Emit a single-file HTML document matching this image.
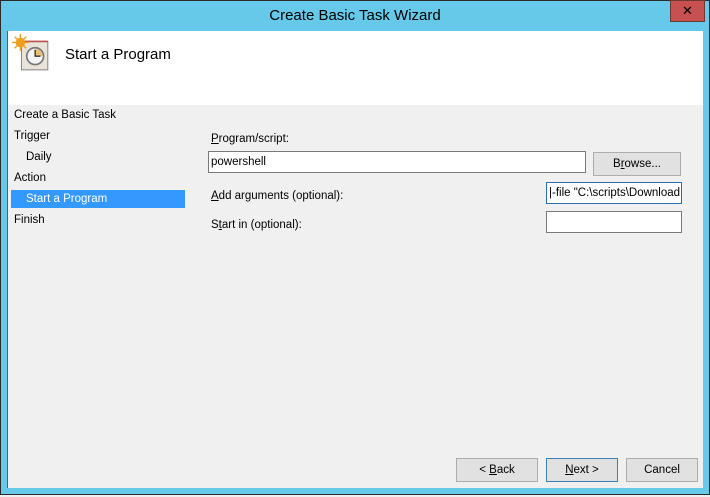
<!DOCTYPE html>
<html><head><meta charset="utf-8"><style>
*{margin:0;padding:0;box-sizing:border-box}
body{width:710px;height:497px;background:#f0f0f0;position:relative;overflow:hidden;font-family:"Liberation Sans","DejaVu Sans",sans-serif;font-size:12px;color:#000}
.win{position:absolute;left:0;top:0;width:710px;height:495px;background:#66c9e9;border:1px solid #2b2b2b}
.title{position:absolute;left:0;right:0;top:6px;text-align:center;font-size:15px;color:#000}
.close{position:absolute;left:669px;top:-1px;width:35px;height:22px;background:#c75050;border:1px solid #6b3a30;color:#000;font-weight:bold;font-size:13px;text-align:center;line-height:19px}
.content{position:absolute;left:7px;top:30px;width:695px;height:457px;background:#f0f0f0;box-shadow:-1px 0 0 #3a6a80}
.head{position:absolute;left:0;top:0;width:695px;height:74px;background:#fff}
.h1{position:absolute;left:57px;top:15px;font-size:15px}
.nav{position:absolute;left:6px;font-size:11.5px}
.sel{position:absolute;left:3px;top:159px;width:174px;height:18px;background:#3399ff}
.lbl{position:absolute;font-size:11.5px}
.in{position:absolute;background:#fff;border:1px solid #7a7a7a;height:22px;font-size:11.5px;padding:0 2px;line-height:20px;white-space:nowrap;overflow:hidden}
.btn{position:absolute;background:#e1e1e1;border:1px solid #adadad;height:24px;text-align:center;line-height:22px;font-size:11.5px;width:88px}
u{text-decoration:underline}
</style></head><body>
<div class="win">
<div class="title">Create Basic Task Wizard</div>
<div class="close">✕</div>
<div class="content">
<div class="head">
<svg style="position:absolute;left:4px;top:3px" width="40" height="38" viewBox="0 0 38 36">
<rect x="9" y="7" width="25" height="27" fill="#e8e4da" stroke="#8a8a8a"/>
<line x1="10" y1="7" x2="34" y2="7" stroke="#c05050" stroke-width="1.5"/>
<circle cx="22" cy="21" r="8" fill="#f4f4f4" stroke="#777" stroke-width="1.6"/>
<path d="M22 21 L22 14 A7 7 0 0 1 29 21 Z" fill="#e8c070"/>
<path d="M22 15 V21 H27" stroke="#333" fill="none" stroke-width="1.3"/>
<circle cx="8" cy="8" r="4.5" fill="#f0a020"/>
<path d="M8 0V16M0 8H16M2.5 2.5L13.5 13.5M13.5 2.5L2.5 13.5" stroke="#f0a020" stroke-width="1.3"/>
</svg>
<div class="h1">Start a Program</div>
</div>
<div class="nav" style="top:78px">Create a Basic Task</div>
<div class="nav" style="top:99px">Trigger</div>
<div class="nav" style="top:120px;left:18px">Daily</div>
<div class="nav" style="top:141px">Action</div>
<div class="sel"></div>
<div class="nav" style="top:162px;left:18px;color:#fff">Start a Program</div>
<div class="nav" style="top:183px">Finish</div>
<div class="lbl" style="left:203px;top:102px"><u>P</u>rogram/script:</div>
<div class="in" style="left:200px;top:120px;width:378px">powershell</div>
<div class="btn" style="left:585px;top:121px"><span>B<u>r</u>owse...</span></div>
<div class="lbl" style="left:203px;top:159px"><u>A</u>dd arguments (optional):</div>
<div class="in" style="left:538px;top:151px;width:136px;border-color:#2a6fad">|-file "C:\scripts\Download</div>
<div class="lbl" style="left:203px;top:188px">S<u>t</u>art in (optional):</div>
<div class="in" style="left:538px;top:180px;width:136px"></div>
<div class="btn" style="left:448px;top:427px;width:82px">&lt; <u>B</u>ack</div>
<div class="btn" style="left:538px;top:427px;width:72px;border-color:#3c7fb1"><u>N</u>ext &gt;</div>
<div class="btn" style="left:618px;top:427px;width:72px">Cancel</div>
</div>
</div>
</body></html>
